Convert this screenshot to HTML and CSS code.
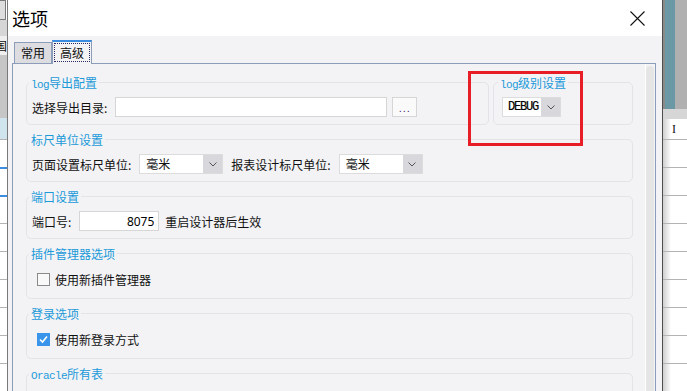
FILE: index.html
```html
<!DOCTYPE html>
<html lang="zh-CN">
<head>
    <meta charset="UTF-8">
    <meta name="viewport" content="width=device-width, initial-scale=1.0">
    <title>选项</title>
    <link rel="stylesheet" href="styles.css">
</head>
<body>
    <div class="desktop">
        <!-- 背景程序（左侧露出的部分） -->
        <div class="app-left">
            <div class="app-left-icon"></div>
            <div class="app-left-bar"></div>
            <div class="app-left-tab"><span>国</span></div>
            <div class="app-left-gray"></div>
            <div class="app-left-sel"></div>
            <div class="app-row"></div>
            <div class="app-row blue"></div>
            <div class="app-row blue"></div>
            <div class="app-row"></div>
            <div class="app-row"></div>
            <div class="app-row"></div>
            <div class="app-row"></div>
            <div class="app-row"></div>
            <div class="app-row"></div>
        </div>

        <div class="dialog">
            <div class="titlebar">
                <span class="title">选项</span>
                <svg class="close" width="15" height="15" viewBox="0 0 15 15">
                    <path d="M0.5 0.5 L14.5 14.5 M14.5 0.5 L0.5 14.5" stroke="#111" stroke-width="1.1" fill="none"/>
                </svg>
            </div>

            <div class="dialog-body">
                <div class="tabs">
                    <div class="tab">常用</div>
                    <div class="tab active"><span class="tab-focus">高级</span></div>
                </div>

                <div class="tab-panel">
                    <div class="panel-content">
                        <div class="group-line">
                            <fieldset class="group group-export">
                                <legend><span class="mono">log</span>导出配置</legend>
                                <div class="row">
                                    <label class="field-label">选择导出目录:</label>
                                    <input class="text-input dir-input" type="text">
                                    <button class="browse-btn">...</button>
                                </div>
                            </fieldset>
                            <fieldset class="group group-level">
                                <legend><span class="mono">log</span>级别设置</legend>
                                <div class="row">
                                    <div class="select select-debug">
                                        <span class="select-value debug-value">DEBUG</span>
                                        <span class="select-arrow">
                                            <svg width="8" height="5" viewBox="0 0 8 5"><path d="M0.5 0.5 L4 4 L7.5 0.5" stroke="#555" fill="none"/></svg>
                                        </span>
                                    </div>
                                </div>
                            </fieldset>
                        </div>

                        <fieldset class="group">
                            <legend>标尺单位设置</legend>
                            <div class="row">
                                <label class="field-label">页面设置标尺单位:</label>
                                <div class="select select-unit">
                                    <span class="select-value">毫米</span>
                                    <span class="select-arrow">
                                        <svg width="8" height="5" viewBox="0 0 8 5"><path d="M0.5 0.5 L4 4 L7.5 0.5" stroke="#555" fill="none"/></svg>
                                    </span>
                                </div>
                                <label class="field-label">报表设计标尺单位:</label>
                                <div class="select select-unit">
                                    <span class="select-value">毫米</span>
                                    <span class="select-arrow">
                                        <svg width="8" height="5" viewBox="0 0 8 5"><path d="M0.5 0.5 L4 4 L7.5 0.5" stroke="#555" fill="none"/></svg>
                                    </span>
                                </div>
                            </div>
                        </fieldset>

                        <fieldset class="group">
                            <legend>端口设置</legend>
                            <div class="row">
                                <label class="field-label">端口号:</label>
                                <input class="text-input port-input" type="text" value="8075">
                                <span class="hint">重启设计器后生效</span>
                            </div>
                        </fieldset>

                        <fieldset class="group group-check">
                            <legend>插件管理器选项</legend>
                            <div class="row">
                                <span class="check"></span>
                                <span>使用新插件管理器</span>
                            </div>
                        </fieldset>

                        <fieldset class="group group-check">
                            <legend>登录选项</legend>
                            <div class="row">
                                <span class="check checked">
                                    <svg width="13" height="13" viewBox="0 0 13 13"><path d="M3 6.5 L5.5 9 L10 3.5" stroke="#fff" stroke-width="1.6" fill="none"/></svg>
                                </span>
                                <span>使用新登录方式</span>
                            </div>
                        </fieldset>

                        <fieldset class="group">
                            <legend><span class="mono">Oracle</span>所有表</legend>
                            <div class="row"></div>
                        </fieldset>
                    </div>
                    <div class="scrollbar"><div class="scroll-thumb"></div></div>
                </div>
            </div>
        </div>

        <!-- 背景程序（右侧露出的部分） -->
        <div class="app-right">
            <div class="app-right-top"></div>
            <div class="app-right-bar"></div>
            <div class="app-right-head">I</div>
            <div class="app-row"></div>
            <div class="app-row"></div>
            <div class="app-row"></div>
            <div class="app-row"></div>
            <div class="app-row"></div>
            <div class="app-row"></div>
            <div class="app-row"></div>
            <div class="app-row"></div>
            <div class="app-row"></div>
        </div>

        <!-- 标注红框 -->
        <div class="highlight"></div>
    </div>
</body>
</html>
```

FILE: styles.css
```css
* {
    box-sizing: border-box;
}
body {
    margin: 0;
    font-family: "Noto Sans CJK SC", "Microsoft YaHei", sans-serif;
    font-size: 12px;
    color: #111;
    overflow: hidden;
}
.desktop {
    position: relative;
    display: flex;
    width: 687px;
    height: 391px;
    overflow: hidden;
    background: #fff;
}

/* 背景程序 */
.app-left {
    width: 7px;
    flex: none;
    display: flex;
    flex-direction: column;
    overflow: hidden;
    background: #fff;
}
.app-left-icon {
    height: 20px;
    background: #dedede;
    border: 1px solid #7a7a7a;
    border-left: none;
    margin-right: 1px;
}
.app-left-bar {
    height: 17px;
    background: #d6d6d6;
}
.app-left-tab {
    height: 19px;
    background: #efefef;
    line-height: 19px;
    white-space: nowrap;
    overflow: hidden;
}
.app-left-tab span {
    margin-left: -5px;
}
.app-left-gray {
    height: 65px;
    background: #c6c6c6;
}
.app-left-sel {
    height: 21px;
    background: #cfe4ec;
}
.app-row {
    height: 28px;
    flex: none;
    border-top: 1px solid #b4b4b4;
}
.app-row.blue {
    border-top: 2px solid #3c8de2;
}
.app-right {
    width: 24px;
    flex: none;
    display: flex;
    flex-direction: column;
    background: linear-gradient(to right, #cfcfcf, #fff 8px);
}
.app-right-top {
    height: 112px;
    background: linear-gradient(to right, #8a8a8a 0 2px, #6b98a5 2px 12px, #b0b0b0 12px);
}
.app-right-bar {
    height: 10px;
    background: #d6d6d6;
}
.app-right-head {
    height: 20px;
    padding-left: 9px;
    font-family: "Liberation Serif", serif;
    font-size: 12px;
    line-height: 20px;
}

/* 对话框 */
.dialog {
    width: 656px;
    flex: none;
    display: flex;
    flex-direction: column;
    border-left: 1px solid #7a7a7a;
    border-right: 1px solid #4e4e4e;
}
.titlebar {
    height: 36px;
    flex: none;
    display: flex;
    align-items: center;
    justify-content: space-between;
    padding: 0 17px 0 4px;
    background: #fff;
}
.title {
    font-size: 18px;
    line-height: 20px;
    color: #000;
}
.close {
    display: block;
}
.dialog-body {
    flex: 1;
    display: flex;
    flex-direction: column;
    padding: 4px 6px 0 4px;
    background: #f3f3f5;
}

/* 选项卡 */
.tabs {
    height: 24px;
    flex: none;
    display: flex;
    align-items: flex-end;
    padding-left: 2px;
    border-bottom: 1px solid #8c9db9;
}
.tab {
    width: 38px;
    height: 21px;
    text-align: center;
    line-height: 19px;
    background: #dcdce1;
    border: 1px solid #8c9db9;
    border-bottom: none;
}
.tab.active {
    width: 40px;
    height: 24px;
    margin-bottom: -1px;
    padding: 1px 1px 0;
    background: #f3f3f5;
    border-top: 2px solid #3a8ce0;
}
.tab-focus {
    display: block;
    height: 19px;
    line-height: 17px;
    border: 1px dotted #2a2a60;
}
.tab-panel {
    flex: 1;
    display: flex;
    border-left: 1px solid #8c9db9;
    border-right: 1px solid #8c9db9;
}
.panel-content {
    flex: 1;
    padding: 11px 12px 0 13px;
}
.scrollbar {
    width: 10px;
    flex: none;
    padding: 2px 1px 0 0;
    border-left: 1px solid #fff;
}
.scroll-thumb {
    height: 100%;
    background: #e5e5e5;
    border-radius: 4px 4px 0 0;
}

/* 分组 */
.group-line {
    display: flex;
    gap: 4px;
}
.group {
    margin: 0 0 7px;
    min-width: 0;
    padding: 7px 6px 7px 2px;
    border: 1px solid #e3e3e8;
    border-radius: 5px;
}
.group-export {
    flex: 1;
}
.group-level {
    width: 140px;
    flex: none;
    padding-left: 4px;
}
.group-check {
    padding-top: 8px;
    padding-bottom: 9px;
}
.group legend {
    height: 15px;
    padding: 0 2px;
    line-height: 15px;
    color: #1b9ad9;
    white-space: nowrap;
}
.mono {
    font-family: "Liberation Mono", monospace;
    font-size: 11px;
    line-height: 1;
    letter-spacing: -0.6px;
}
.row {
    display: flex;
    align-items: center;
    height: 20px;
    padding-left: 3px;
    white-space: nowrap;
}
.group-level .row {
    padding-left: 4px;
}
.field-label {
    margin-right: 8px;
}

/* 控件 */
.text-input {
    height: 20px;
    margin: 0;
    padding: 0 4px;
    font: inherit;
    color: #000;
    background: #fff;
    border: 1px solid #d6d6d6;
    outline: none;
}
.dir-input {
    width: 272px;
}
.port-input {
    width: 80px;
    text-align: right;
    font-family: "Noto Sans", sans-serif;
}
.hint {
    margin-left: 6px;
}
.browse-btn {
    width: 25px;
    height: 20px;
    margin-left: 5px;
    padding: 0;
    font-family: "Liberation Sans", sans-serif;
    font-size: 11px;
    line-height: 20px;
    letter-spacing: 1px;
    color: #4e2a78;
    background: #fafafa;
    border: 1px solid #d6d6d6;
}
.select {
    display: flex;
    height: 20px;
    background: #fff;
    border: 1px solid #dcdcdc;
}
.select-unit {
    width: 84px;
    margin-right: 8px;
}
.select-debug {
    width: 59px;
}
.select-value {
    flex: 1;
    padding-left: 6px;
    line-height: 18px;
}
.debug-value {
    padding-left: 5px;
    font-family: "Liberation Mono", monospace;
    font-size: 12px;
    letter-spacing: -1.2px;
    color: #000;
    -webkit-text-stroke: 0.2px #000;
}
.select-arrow {
    width: 19px;
    display: flex;
    align-items: center;
    justify-content: center;
    background: #d8d8dc;
}
.check {
    width: 13px;
    height: 13px;
    margin: 0 5px;
    background: #f9f9f9;
    border: 1px solid #8a8a8a;
}
.check.checked {
    background: #3a94ea;
    border-color: #3a94ea;
}
.check svg {
    display: block;
    margin: -1px;
}

/* 标注红框 */
.highlight {
    position: absolute;
    left: 468px;
    top: 71px;
    width: 115px;
    height: 75px;
    border: 3px solid #e81e27;
}
```
